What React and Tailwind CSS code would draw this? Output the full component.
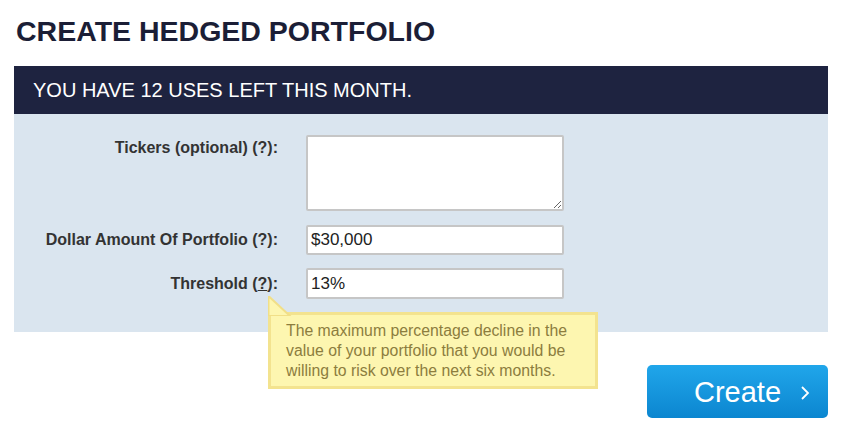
export default function App() {
  const font = { fontFamily: '"Liberation Sans", Arial, sans-serif' };
  return (
    <div className="w-[848px] h-[430px] bg-white overflow-hidden" style={font}>
      <div className="pl-[14px] w-[828px]">
        <h1 className="mt-[15px] pl-[2px] text-[28.5px] leading-[32px] font-bold text-[#1b1e36]">
          CREATE HEDGED PORTFOLIO
        </h1>
        <div className="mt-[19px] h-[48px] bg-[#1e2340] flex items-center pl-[19px] text-white text-[20px] leading-[24px]">
          YOU HAVE 12 USES LEFT THIS MONTH.
        </div>
        <div className="bg-[#dae5ef] pt-[21px] pb-[33px] flex flex-col gap-[13px]">
          <div className="flex items-start">
            <div className="w-[264px] text-right text-[16px] leading-[20px] font-bold text-[#333]">
              <div className="mt-[3px]">Tickers (optional) (?):</div>
            </div>
            <textarea className="ml-[28px] w-[258px] h-[76px] bg-white border-2 border-[#c6c6c6] rounded-[2px] outline-none block" />
          </div>
          <div className="flex items-center mt-[1px]">
            <div className="w-[264px] text-right text-[16px] leading-[20px] font-bold text-[#333]">
              Dollar Amount Of Portfolio (?):
            </div>
            <div className="ml-[28px] w-[258px] h-[30px] bg-white border-2 border-[#c6c6c6] rounded-[2px] flex items-center pl-[3px] text-[17px] text-[#222]">
              $30,000
            </div>
          </div>
          <div className="flex items-center relative">
            <div className="w-[264px] text-right text-[16px] leading-[20px] font-bold text-[#333]">
              Threshold (<span className="underline">?</span>):
            </div>
            <div className="ml-[28px] w-[258px] h-[31px] bg-white border-2 border-[#c6c6c6] rounded-[2px] flex items-center pl-[3px] text-[17px] text-[#222]">
              13%
            </div>
            <div className="absolute left-[254px] top-[28px] z-10">
              <svg width="24" height="20" viewBox="0 0 24 20" className="block">
                <polygon points="0.5,0 0.5,20 22,20" fill="#fdf6b0" stroke="#f1df88" strokeWidth="2" />
              </svg>
              <div className="-mt-[4px] w-[330px] bg-[#fdf6b0] border-[3px] border-[#f3e38f] pl-[15px] pt-[6px] pb-[5px] text-[15.8px] leading-[20px] text-[#8c7d3e]">
                The maximum percentage decline in the value of your portfolio that you would be willing to risk over the next six months.
              </div>
            </div>
          </div>
        </div>
        <div className="flex justify-end mt-[33px]">
          <button className="w-[181px] h-[53px] rounded-[5px] bg-gradient-to-b from-[#20a6ea] to-[#0b86d0] flex items-center pl-[47px] text-white text-[29px] leading-[34px]">
            <span>Create</span>
            <svg width="10" height="16" viewBox="0 0 10 16" className="ml-[19px] mt-[2px]">
              <polyline points="2,2 8,8 2,14" fill="none" stroke="white" strokeWidth="1.8" />
            </svg>
          </button>
        </div>
      </div>
    </div>
  );
}
